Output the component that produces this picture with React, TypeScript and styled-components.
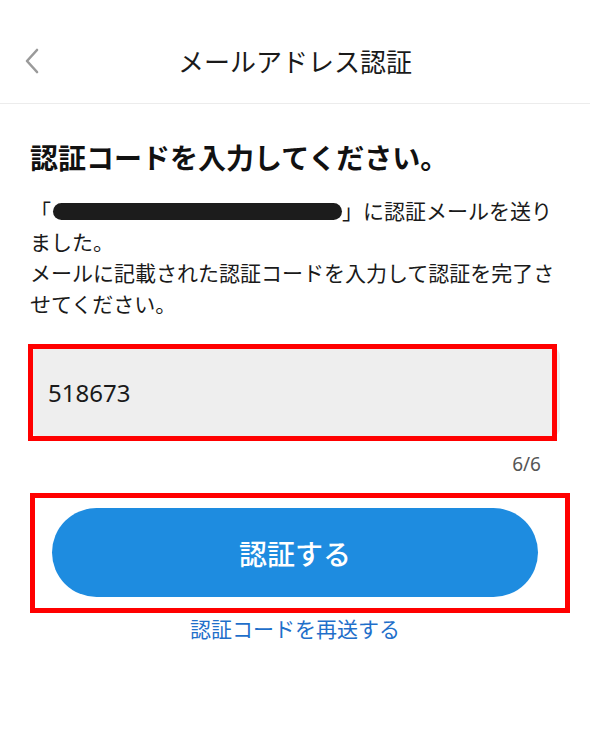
import styled, { createGlobalStyle } from 'styled-components';

const GlobalStyle = createGlobalStyle`
  body {
    margin: 0;
    background: #fff;
    font-family: "Noto Sans CJK JP", "Noto Sans", sans-serif;
    color: #1a1a1a;
  }
`;

const Page = styled.div`
  width: 590px;
  min-height: 738px;
  background: #fff;
`;

const Header = styled.header`
  box-sizing: border-box;
  height: 104px;
  padding-top: 18px;
  display: grid;
  grid-template-columns: 70px 1fr 70px;
  align-items: center;
  border-bottom: 1px solid #ececec;
`;

const BackButton = styled.button`
  border: none;
  background: none;
  padding: 0 0 0 24px;
  display: flex;
  align-items: center;
  cursor: pointer;
`;

const Title = styled.h1`
  margin: 0;
  font-size: 26px;
  font-weight: 400;
  text-align: center;
  color: #1a1a1a;
`;

const Content = styled.main`
  padding: 0 30px;
  display: flex;
  flex-direction: column;
`;

const Heading = styled.h2`
  margin: 34px 0 0;
  font-size: 28px;
  line-height: 39px;
  font-weight: 700;
  color: #111;
`;

const Message = styled.p`
  margin: 18px 0 0;
  font-size: 21px;
  line-height: 31px;
  color: #1a1a1a;
`;

const Redacted = styled.span`
  display: inline-block;
  width: 289px;
  height: 17px;
  margin-left: 2px;
  vertical-align: -1px;
  border-radius: 9px;
  background: #1c1c1c;
`;

const Marked = styled.div<{ $inset: string }>`
  position: relative;

  &::after {
    content: '';
    position: absolute;
    inset: ${(p) => p.$inset};
    border: 5px solid #ff0000;
    pointer-events: none;
  }
`;

const CodeField = styled.input`
  box-sizing: border-box;
  width: 100%;
  height: 88px;
  border: none;
  border-radius: 8px;
  background: #eeeeee;
  padding: 0 18px;
  font-family: "Noto Sans", "Noto Sans CJK JP", sans-serif;
  font-size: 24px;
  color: #1a1a1a;
  outline: none;
`;

const FieldWrap = styled(Marked)`
  margin-top: 29px;
`;

const Counter = styled.div`
  margin-top: 15px;
  padding-right: 19px;
  text-align: right;
  font-family: "Noto Sans", sans-serif;
  font-size: 19px;
  line-height: 26px;
  color: #555;
`;

const ButtonWrap = styled(Marked)`
  margin: 31px 22px 0 22px;
`;

const PrimaryButton = styled.button`
  width: 100%;
  height: 89px;
  border: none;
  border-radius: 45px;
  background: #1e8ce0;
  color: #fff;
  font-family: "Noto Sans CJK JP", sans-serif;
  font-size: 28px;
  font-weight: 500;
  cursor: pointer;
`;

const ResendLink = styled.a`
  margin-top: 17px;
  align-self: center;
  font-size: 21px;
  line-height: 28px;
  color: #1f6fca;
  text-decoration: none;
  cursor: pointer;
`;

const ChevronLeft = () => (
  <svg width="16" height="26" viewBox="0 0 16 26" fill="none">
    <path d="M13 2 L3 13 L13 24" stroke="#9a9a9a" strokeWidth="2.6" strokeLinecap="round" strokeLinejoin="round" />
  </svg>
);

export default function App() {
  return (
    <Page>
      <GlobalStyle />
      <Header>
        <BackButton aria-label="戻る">
          <ChevronLeft />
        </BackButton>
        <Title>メールアドレス認証</Title>
        <span />
      </Header>
      <Content>
        <Heading>認証コードを入力してください。</Heading>
        <Message>
          「<Redacted />」に認証メールを送りました。
          <br />
          メールに記載された認証コードを入力して認証を完了させてください。
        </Message>
        <FieldWrap $inset="-4px 3px -5px -2px">
          <CodeField defaultValue="518673" maxLength={6} />
        </FieldWrap>
        <Counter>6/6</Counter>
        <ButtonWrap $inset="-15px -32px -16px -22px">
          <PrimaryButton>認証する</PrimaryButton>
        </ButtonWrap>
        <ResendLink>認証コードを再送する</ResendLink>
      </Content>
    </Page>
  );
}
